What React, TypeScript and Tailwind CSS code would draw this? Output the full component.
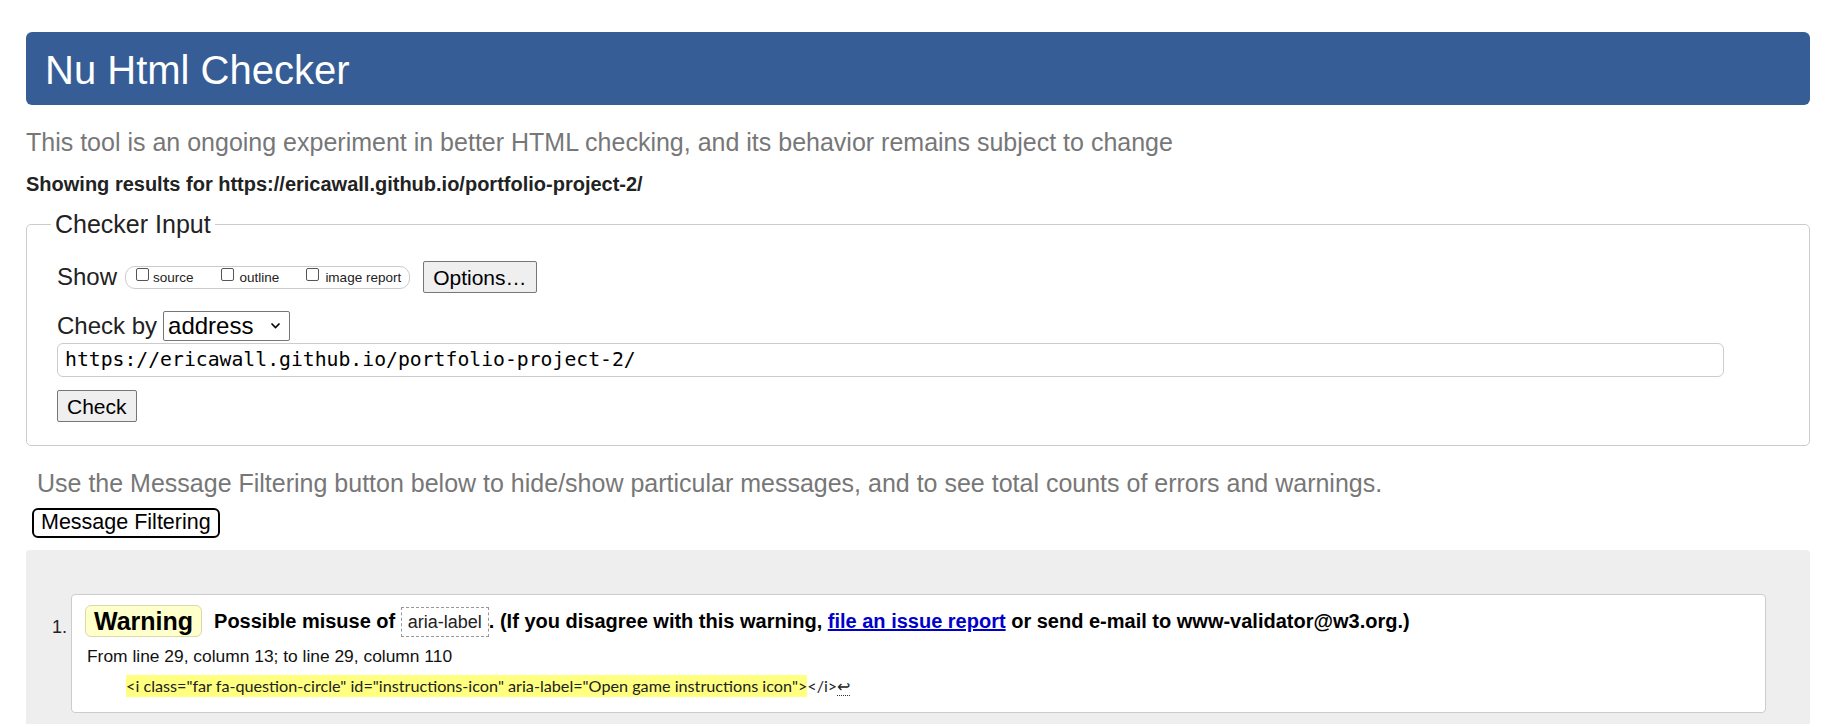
export default function App() {
  return (
    <div className="min-h-screen bg-white pl-[26px] pr-[25px] pt-[32px] font-['Liberation_Sans',Arial,sans-serif] text-[#222]">
      <header className="flex h-[73px] items-center rounded-md bg-[#365d95] pl-[19px] pt-[2px]">
        <h1 className="text-[40px] leading-none text-white">Nu Html Checker</h1>
      </header>

      <p className="mt-[23px] text-[25px] leading-[29px] text-[#777]">
        This tool is an ongoing experiment in better HTML checking, and its behavior remains subject to change
      </p>
      <p className="mt-[15px] text-[20px] font-bold leading-[24px] text-[#222]">
        Showing results for https://ericawall.github.io/portfolio-project-2/
      </p>

      <fieldset className="mt-[14px] rounded-[5px] border border-[#ccc] pb-[23px] pl-[30px]">
        <legend className="-ml-[6px] px-[4px] text-[25px] leading-[29px] text-[#222]">Checker Input</legend>

        <div className="mt-[22px] flex h-[32px] items-center">
          <span className="text-[24px] leading-[28px]">Show</span>
          <div className="ml-[8px] flex h-[23px] items-center rounded-[10px] border border-[#ccc] pl-[10px] pr-[8px] text-[13.5px] text-[#222]">
            <span className="-mt-[6px] h-[13px] w-[13px] rounded-[2px] border border-[#555] bg-white" />
            <span className="ml-[4px] mt-[2px]">source</span>
            <span className="-mt-[6px] ml-[27px] h-[13px] w-[13px] rounded-[2px] border border-[#555] bg-white" />
            <span className="ml-[6px] mt-[2px]">outline</span>
            <span className="-mt-[6px] ml-[27px] h-[13px] w-[13px] rounded-[2px] border border-[#555] bg-white" />
            <span className="ml-[6px] mt-[2px]">image report</span>
          </div>
          <button className="ml-[13px] h-[32px] rounded-[2px] border border-[#767676] bg-[#efefef] px-[9px] text-[21px] leading-none text-black">
            Options…
          </button>
        </div>

        <div className="mt-[18px] flex h-[30px] items-center">
          <span className="text-[24px] leading-[28px]">Check by</span>
          <div className="ml-[6px] flex h-[30px] w-[127px] items-center justify-between rounded-[2px] border border-[#767676] bg-white pl-[4px] pr-[8px]">
            <span className="text-[24px] leading-none text-black">address</span>
            <svg width="11" height="8" viewBox="0 0 11 8" fill="none">
              <path d="M1.5 1.5 L5.5 5.5 L9.5 1.5" stroke="#000" strokeWidth="1.6" />
            </svg>
          </div>
        </div>

        <div className="mt-[2px] flex h-[34px] w-[1667px] items-center rounded-[6px] border border-[#ccc] pl-[7px] font-['DejaVu_Sans_Mono',monospace] text-[19.75px] text-black">
          https://ericawall.github.io/portfolio-project-2/
        </div>

        <button className="mt-[13px] h-[32px] rounded-[2px] border border-[#767676] bg-[#efefef] px-[9px] text-[21px] leading-none text-black">
          Check
        </button>
      </fieldset>

      <p className="mt-[23px] pl-[11px] text-[25px] leading-[29px] text-[#777]">
        Use the Message Filtering button below to hide/show particular messages, and to see total counts of errors and warnings.
      </p>
      <button className="ml-[6px] mt-[10px] h-[30px] rounded-[6px] border-2 border-black bg-white px-[7px] text-[21.5px] leading-none text-black">
        Message Filtering
      </button>

      <section className="mt-[12px] flex min-h-[200px] items-start rounded-t-[4px] bg-[#eee] pl-[26px] pr-[44px] pt-[44px]">
        <div className="w-[19px] pt-[24px] text-[18px] leading-none text-[#222]">1.</div>
        <div className="flex-1 rounded-[4px] border border-[#ccc] bg-white pb-[15px] pl-[15px] pt-[10px]">
          <div className="flex items-center">
            <span className="-ml-[2px] flex h-[32px] items-center rounded-[6px] border border-[#dcd9a8] bg-[#ffffcc] px-[8px] text-[25px] font-bold leading-none text-black">
              Warning
            </span>
            <p className="ml-[12px] text-[20px] font-bold leading-[30px] text-black">
              Possible misuse of{' '}
              <code className="inline-block border border-dashed border-[#999] px-[6px] font-['Liberation_Sans',Arial,sans-serif] text-[18px] font-normal leading-[28px] text-[#222]">
                aria-label
              </code>
              . (If you disagree with this warning,{' '}
              <a href="#" className="text-[#0000cc] underline">
                file an issue report
              </a>{' '}
              or send e-mail to www-validator@w3.org.)
            </p>
          </div>
          <p className="mt-[8px] text-[17.4px] leading-[22px] text-[#111]">From line 29, column 13; to line 29, column 110</p>
          <p className="mt-[8px] h-[22px] pl-[39px] font-['Lato',sans-serif] text-[16.2px] leading-[22px] text-[#222]">
            <span className="inline-block h-[22px] bg-[#ffff80] leading-[22px]">
              &lt;i class="far fa-question-circle" id="instructions-icon" aria-label="Open game instructions icon"&gt;
            </span>
            &lt;/i&gt;
            <span className="border-b border-dotted border-[#333]">↩</span>
          </p>
        </div>
      </section>
    </div>
  );
}
